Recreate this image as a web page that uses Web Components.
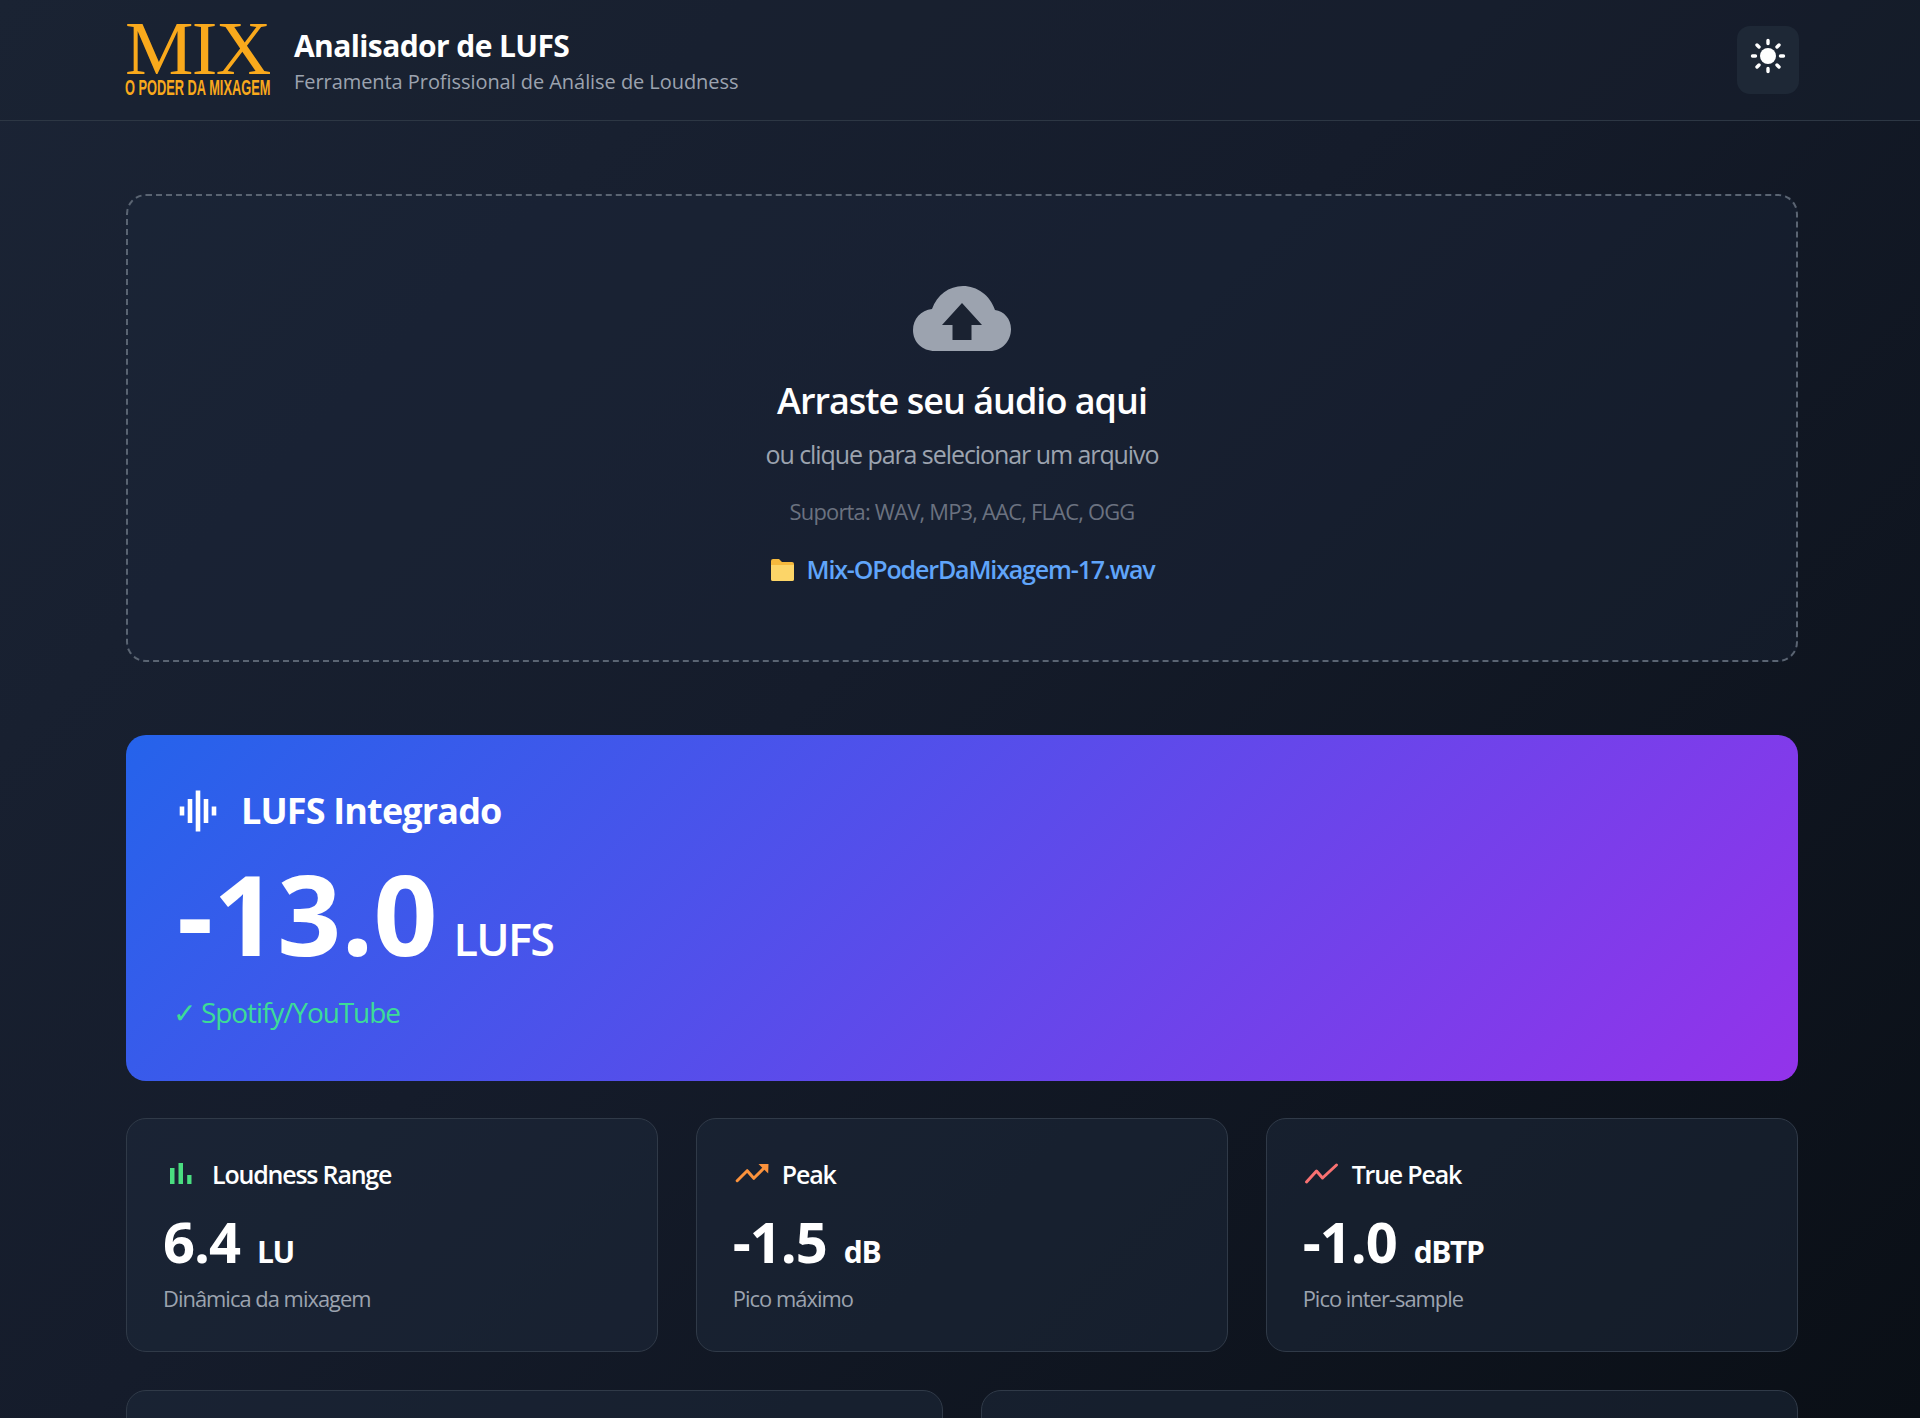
<!DOCTYPE html>
<html lang="pt-BR"><head><meta charset="utf-8"><title>Analisador de LUFS</title>
<style>
html,body{margin:0;height:1418px;overflow:hidden}
body{background:linear-gradient(135deg,#1b2435 0%,#151c2b 45%,#0a0f16 100%);font-family:"Open Sans","Noto Sans",sans-serif;color:#fff}
main{display:block;padding:73px 122px 0 126px}
.grid3{display:grid;grid-template-columns:repeat(3,1fr);gap:37.5px;margin-top:37px}
.grid2{display:grid;grid-template-columns:repeat(2,1fr);gap:37.5px;margin-top:37.5px}
</style></head><body>
<app-header></app-header>
<main>
<drop-zone file="Mix-OPoderDaMixagem-17.wav"></drop-zone>
<hero-card value="-13.0" unit="LUFS" status="✓ Spotify/YouTube">LUFS Integrado</hero-card>
<div class="grid3">
<metric-card value="6.4" unit="LU" sub="Dinâmica da mixagem">
<svg slot="icon" viewBox="0 0 36 27" width="36" height="27"><path fill="#4ade80" d="M7 8h4.500v16H7zM15.500 3H20v21h-4.500zM24.200 15h4.300v9h-4.300z"/></svg>Loudness Range</metric-card>
<metric-card value="-1.5" unit="dB" sub="Pico máximo">
<svg slot="icon" viewBox="0 0 36 27" width="36" height="27"><path fill="none" stroke="#fb923c" stroke-width="3" stroke-linecap="round" stroke-linejoin="round" d="M4.200 20.700l10-10 6.600 7.600L31 8"/><path fill="#fb923c" d="M25.500 4h10l-.3 9.500z"/></svg>Peak</metric-card>
<metric-card value="-1.0" unit="dBTP" sub="Pico inter-sample">
<svg slot="icon" viewBox="0 0 36 27" width="36" height="27"><path fill="none" stroke="#f87171" stroke-width="3" stroke-linecap="round" stroke-linejoin="round" d="M3.500 22l10-11 6 7 14-13"/></svg>True Peak</metric-card>
</div>
<div class="grid2"><panel-card></panel-card><panel-card></panel-card></div>
</main>
<template id="t-header"><style>
:host{display:flex;align-items:center;box-sizing:border-box;height:121px;padding:0 121px 0 125px;border-bottom:1px solid #2d3744;background:rgba(26,34,50,.35)}
.logo{width:146px;height:76px;color:#f9a91c;flex:none;overflow:visible}
.mix{display:block;font:400 77px/52px "Liberation Serif",serif;letter-spacing:-1.7px;height:56px;white-space:nowrap}
.tag{display:block;font:700 22px/20px "Liberation Sans",sans-serif;white-space:nowrap;transform:scaleX(.582);transform-origin:0 0}
.txt{margin-left:23px;flex:1;padding-top:4px}
h1{margin:0;font:700 30px/40px "Open Sans",sans-serif;letter-spacing:-.6px}
p{margin:0;font:400 20px/32px "Open Sans",sans-serif;color:#9ca3af;letter-spacing:-.06px}
.btn{width:62px;height:68px;border-radius:13px;background:#1e2836;display:flex;justify-content:center;padding-bottom:8px;box-sizing:border-box;align-items:center}
</style>
<div class="logo"><span class="mix">MIX</span><span class="tag">O PODER DA MIXAGEM</span></div>
<div class="txt"><h1>Analisador de LUFS</h1><p>Ferramenta Profissional de Análise de Loudness</p></div>
<div class="btn"><svg width="38" height="38" viewBox="-19 -19 38 38"><circle r="8" fill="#fff"/><g stroke="#fff" stroke-width="3.400" stroke-linecap="round"><path d="M0-15.500v3M0 12.500v3M-15.500 0h3M12.500 0h3M-11-11l2 2M11-11l-2 2M-11 11l2-2M11 11l-2-2"/></g></svg></div>
</template>
<template id="t-drop"><style>
:host{display:block;box-sizing:border-box;height:468px;border:2.5px dashed #5a6472;border-radius:20px;background:rgba(30,41,59,.35);text-align:center;padding-top:90px}
svg.cloud{display:block;margin:0 auto;width:98px;height:66px}
h2{margin:25px 0 0;font:600 36px/48px "Open Sans",sans-serif;letter-spacing:-1px}
.a{margin-top:12px;font:400 25px/34px "Open Sans",sans-serif;color:#9ca3af;letter-spacing:-1.07px}
.b{margin-top:26px;font:400 21.900px/30px "Open Sans",sans-serif;color:#6b7280;letter-spacing:-.79px}
.c{margin-top:25px;display:flex;justify-content:center;align-items:center;gap:12px;font:600 25px/34px "Open Sans",sans-serif;color:#60a5fa;letter-spacing:-1.15px}
</style>
<svg class="cloud" viewBox="0 0 98 66"><path fill="#9ca3af" d="M22 65C9 65 0 56 0 44c0-11 8-20 19-21C24 9 36 0 50 0c14 0 27 9 32 24 9 1 16 9 16 19 0 12-9 22-21 22z"/><path fill="#1a2231" d="M49 17L69 39H58.500V54h-19V39H29z"/></svg>
<h2>Arraste seu áudio aqui</h2>
<div class="a">ou clique para selecionar um arquivo</div>
<div class="b">Suporta: WAV, MP3, AAC, FLAC, OGG</div>
<div class="c"><svg width="25" height="23" viewBox="0 0 25 23"><path fill="#f5b93d" d="M1 3a2 2 0 0 1 2-2h6l3 3h10a2 2 0 0 1 2 2v15a2 2 0 0 1-2 2H3a2 2 0 0 1-2-2z"/><path fill="#fcd568" d="M1 7h23v14a2 2 0 0 1-2 2H3a2 2 0 0 1-2-2z"/></svg><span id="f"></span></div>
</template>
<template id="t-hero"><style>
:host{display:block;box-sizing:border-box;height:346px;margin-top:73px;border-radius:20px;background:linear-gradient(135deg,#2563eb,#9333ea);padding:50.500px 50px 0;color:#fff}
.t{display:flex;align-items:center;height:50px;font:700 36px/50px "Open Sans",sans-serif;letter-spacing:-.85px;gap:24px}
.t svg{margin-left:3px}
.v{margin-top:21.500px;height:112px;display:flex;align-items:baseline;font:700 112px/112px "Open Sans",sans-serif;letter-spacing:.1px;white-space:nowrap;padding-left:1px}
.u{font:600 45px/50px "Open Sans",sans-serif;letter-spacing:-1.7px;margin-left:16px}
.s{margin-top:23px;margin-left:-3px;font:400 28px/40px "Open Sans",sans-serif;color:#3ddc97;letter-spacing:-1.1px}
</style>
<div class="t"><svg width="38" height="42" viewBox="0 0 38 42"><g stroke="#fff" stroke-width="4.600" stroke-linecap="butt"><path d="M3 16.500v9M11 9v24M19 .5v41M27 9v24M35 16.500v9"/></g></svg><span><slot></slot></span></div>
<div class="v"><span id="v"></span><span class="u" id="u"></span></div>
<div class="s" id="s"></div>
</template>
<template id="t-metric"><style>
:host{display:block;box-sizing:border-box;height:234px;border:1.25px solid #303a48;border-radius:20px;background:rgba(30,41,59,.5);padding:36px 36px 0;color:#fff}
.l{display:flex;align-items:center;gap:13px;height:34px;font:600 25px/34px "Open Sans",sans-serif;letter-spacing:-1.2px;margin-top:2px}
.l ::slotted(svg){display:block;margin-top:-2px}
.v{margin-top:21px;display:flex;align-items:baseline;height:58px;font:700 56px/58px "Open Sans",sans-serif;letter-spacing:-1px}
.u{font:700 30px/40px "Open Sans",sans-serif;letter-spacing:-1.4px;margin-left:17px}
.s{margin-top:14px;font:400 21.900px/30px "Open Sans",sans-serif;color:#9ca3af;letter-spacing:-.98px}
</style>
<div class="l"><slot name="icon"></slot><span><slot></slot></span></div>
<div class="v"><span id="v"></span><span class="u" id="u"></span></div>
<div class="s" id="s"></div>
</template>
<template id="t-panel"><style>
:host{display:block;box-sizing:border-box;height:300px;border:1.25px solid #303a48;border-radius:20px;background:rgba(30,41,59,.5)}
</style></template>
<script>
function base(id,fn){return class extends HTMLElement{constructor(){super();this.attachShadow({mode:"open"}).append(document.getElementById(id).content.cloneNode(true))}connectedCallback(){fn&&fn(this,this.shadowRoot)}}}
const fill=(h,r)=>{for(const [k,a] of [["v","value"],["u","unit"],["s","status"],["s","sub"],["f","file"]]){const e=r.getElementById(k);if(e&&h.hasAttribute(a))e.textContent=h.getAttribute(a)}};
customElements.define("app-header",base("t-header"));
customElements.define("drop-zone",base("t-drop",fill));
customElements.define("hero-card",base("t-hero",fill));
customElements.define("metric-card",base("t-metric",fill));
customElements.define("panel-card",base("t-panel"));
</script>
</body></html>
